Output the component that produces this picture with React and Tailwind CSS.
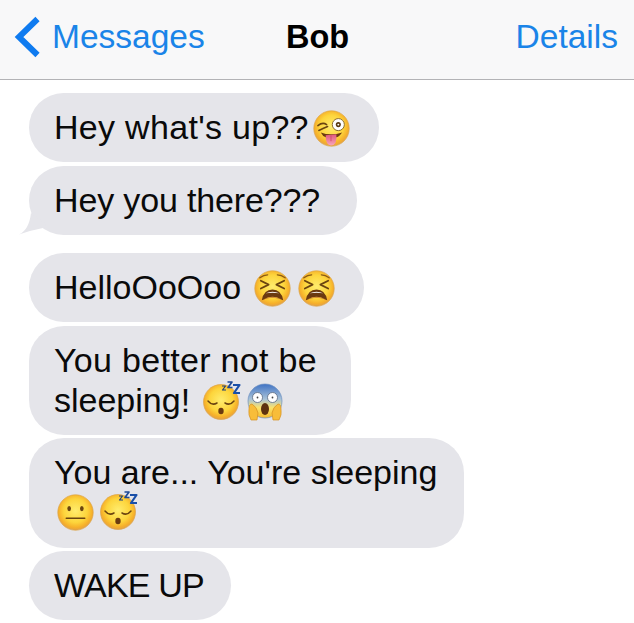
const Defs = () => (
  <svg width="0" height="0" className="absolute">
    <defs>
      <radialGradient id="face" cx="50%" cy="45%" r="55%">
        <stop offset="0%" stopColor="#ffec6e" />
        <stop offset="60%" stopColor="#fdd53c" />
        <stop offset="86%" stopColor="#f6b02a" />
        <stop offset="100%" stopColor="#e2a04a" />
      </radialGradient>
      <linearGradient id="scream" x1="0" y1="0" x2="0" y2="1">
        <stop offset="0%" stopColor="#3f72c4" />
        <stop offset="45%" stopColor="#a9c3d8" />
        <stop offset="70%" stopColor="#fbe36a" />
        <stop offset="100%" stopColor="#f6b92f" />
      </linearGradient>
      <linearGradient id="tongue" x1="0" y1="0" x2="0" y2="1">
        <stop offset="0%" stopColor="#e0587c" />
        <stop offset="100%" stopColor="#f7a6bb" />
      </linearGradient>
    </defs>
  </svg>
);

const Face = ({ children, size = 37 }) => (
  <svg viewBox="0 0 38 38" width={size} height={size} className="shrink-0">
    <circle cx="19" cy="19" r="18.2" fill="url(#face)" stroke="#dba548" strokeWidth="0.7" />
    {children}
  </svg>
);

const Wink = () => (
  <Face>
    <path d="M5 16 Q10 12 14 15 M6 21 Q10 19 15 17" fill="none" stroke="#6b4410" strokeWidth="1.6" strokeLinecap="round" />
    <circle cx="26" cy="15" r="6.2" fill="#fff" stroke="#8a6a2a" strokeWidth="1" />
    <circle cx="26" cy="15" r="2.6" fill="#5a3a12" />
    <circle cx="26" cy="15" r="1" fill="#fff" />
    <path d="M8 23 Q18 27 30 23 Q26 28 24 28 L13 28 Q10 27 8 23Z" fill="#6b3a10" />
    <path d="M13 26 L24 25 Q25 36.5 18.5 36.5 Q13 36.5 13 26Z" fill="url(#tongue)" />
    <path d="M18.5 26 L18.5 32" stroke="#c94468" strokeWidth="0.8" />
  </Face>
);

const Tired = () => (
  <Face>
    <path d="M6 8 Q10 5 14 5 M32 8 Q28 5 24 5" fill="none" stroke="#8a5a14" strokeWidth="1.4" strokeLinecap="round" />
    <path d="M7 11 L15 15 L7 19 M31 11 L23 15 L31 19" fill="none" stroke="#6b4410" strokeWidth="1.8" strokeLinecap="round" strokeLinejoin="round" />
    <path d="M8 31 Q10 20 19 20 Q28 20 30 31 Q19 26 8 31Z" fill="#6b3a10" />
    <path d="M10 30 Q19 25 28 30 Q19 27 10 30Z" fill="#e8a13c" />
    <path d="M12 24 Q19 20.5 26 24 Q19 22.5 12 24Z" fill="#fff" />
  </Face>
);

const Sleep = () => (
  <svg viewBox="0 0 38 40" width="38" height="40" className="shrink-0">
    <circle cx="18" cy="22" r="17.5" fill="url(#face)" stroke="#dba548" strokeWidth="0.7" />
    <path d="M5 21 Q9 26 14 23 M31 21 Q27 26 22 23" fill="none" stroke="#6b4410" strokeWidth="1.5" strokeLinecap="round" />
    <ellipse cx="18" cy="31" rx="2.7" ry="3.3" fill="#6b3a10" />
    <path d="M19 6 H22.5 L19.5 10 H23" fill="none" stroke="#1f3f7a" strokeWidth="1.2" strokeLinejoin="round" />
    <path d="M24.5 2 H29 L25 7.5 H29.5" fill="none" stroke="#1f4a96" strokeWidth="1.7" strokeLinejoin="round" />
    <path d="M30 5 H36.5 L31 13 H37" fill="none" stroke="#1a4fa8" strokeWidth="2.2" strokeLinejoin="round" />
  </svg>
);

const Neutral = () => (
  <Face>
    <ellipse cx="12.5" cy="15" rx="1.9" ry="2.7" fill="#6b4410" />
    <ellipse cx="25.5" cy="15" rx="1.9" ry="2.7" fill="#6b4410" />
    <path d="M9.5 25 H28.5" stroke="#6b4410" strokeWidth="1.6" strokeLinecap="round" />
  </Face>
);

const Scream = () => (
  <svg viewBox="0 0 38 38" width="38" height="38" className="shrink-0">
    <circle cx="19" cy="18" r="17" fill="url(#scream)" stroke="#6d8fc0" strokeWidth="0.7" />
    <circle cx="11.5" cy="14.5" r="5" fill="#fff" stroke="#5a6a80" strokeWidth="0.8" />
    <circle cx="26.5" cy="14.5" r="5" fill="#fff" stroke="#5a6a80" strokeWidth="0.8" />
    <circle cx="11.5" cy="14.5" r="0.9" fill="#444" />
    <circle cx="26.5" cy="14.5" r="0.9" fill="#444" />
    <ellipse cx="19" cy="26" rx="4" ry="6" fill="#5e3210" />
    <path d="M3 26 Q3 21 6 21 Q11 24 12 30 L11 37 L5 37 Q2 32 3 26Z" fill="#f8bd3a" stroke="#d48f22" strokeWidth="0.7" />
    <path d="M35 26 Q35 21 32 21 Q27 24 26 30 L27 37 L33 37 Q36 32 35 26Z" fill="#f8bd3a" stroke="#d48f22" strokeWidth="0.7" />
  </svg>
);

const Bubble = ({ children, className = "" }) => (
  <div className={"relative rounded-[35px] bg-[#e5e5ea] pb-[15px] pl-[25px] pt-[14px] text-[34px] leading-[40px] text-[#0a0a0a] " + className}>
    {children}
  </div>
);

const Row = ({ children }) => <div className="flex h-[40px] items-center whitespace-nowrap">{children}</div>;

export default function App() {
  return (
    <div className="h-[623px] w-[634px] overflow-hidden bg-white font-['Liberation_Sans',Arial,sans-serif]">
      <Defs />
      <header className="flex h-[80px] items-center border-b border-[#b3b3b6] bg-[#f8f8f9] pb-[5px] pl-[14px] pr-[16px] text-[33.5px]">
        <div className="flex w-[272px] items-center gap-[12px] text-[#1a84e8]">
          <svg width="26" height="42" viewBox="0 0 26 42" className="shrink-0">
            <path d="M23.5 3 L5 21 L23.5 39" fill="none" stroke="#0f7bf0" strokeWidth="6" />
          </svg>
          <span>Messages</span>
        </div>
        <span className="text-[32.5px] font-bold text-black">Bob</span>
        <span className="ml-auto text-[#1a84e8]">Details</span>
      </header>
      <main className="flex flex-col items-start pl-[29px] pt-[13px]">
        <Bubble className="w-[350px]">
          <Row>
            <span className="tracking-[0.3px]">Hey what's up??</span>
            <span className="ml-[4px] mt-[2px] flex"><Wink /></span>
          </Row>
        </Bubble>
        <Bubble className="mt-[4px] w-[328px]">
          <Row><span className="tracking-[-0.15px]">Hey you there???</span></Row>
          <svg width="28" height="24" viewBox="0 0 28 24" className="absolute bottom-0 left-[-10px]">
            <path d="M0 23.5 Q10 19 12 2 L28 14 L24 17 Q13 19 0 23.5Z" fill="#e5e5ea" />
          </svg>
        </Bubble>
        <Bubble className="mt-[18px] w-[335px]">
          <Row>
            <span>HelloOoOoo</span>
            <span className="ml-[13px] mt-[2px] flex gap-[7px]"><Tired /><Tired /></span>
          </Row>
        </Bubble>
        <Bubble className="mt-[4px] w-[322px]">
          <Row><span className="tracking-[0.3px]">You better not be</span></Row>
          <Row>
            <span>sleeping!</span>
            <span className="ml-[13px] mt-[1px] flex gap-[5px]"><Sleep /><span className="mt-[3px] flex"><Scream /></span></span>
          </Row>
        </Bubble>
        <Bubble className="mt-[3px] h-[110px] w-[435px]">
          <Row>You are... You're sleeping</Row>
          <Row>
            <span className="ml-[3px] mt-[1px] flex gap-[6px]"><Neutral /><span className="mt-[-4px] flex"><Sleep /></span></span>
          </Row>
        </Bubble>
        <Bubble className="mt-[3px] w-[202px]">
          <Row><span className="tracking-[-0.8px]">WAKE UP</span></Row>
        </Bubble>
      </main>
    </div>
  );
}
